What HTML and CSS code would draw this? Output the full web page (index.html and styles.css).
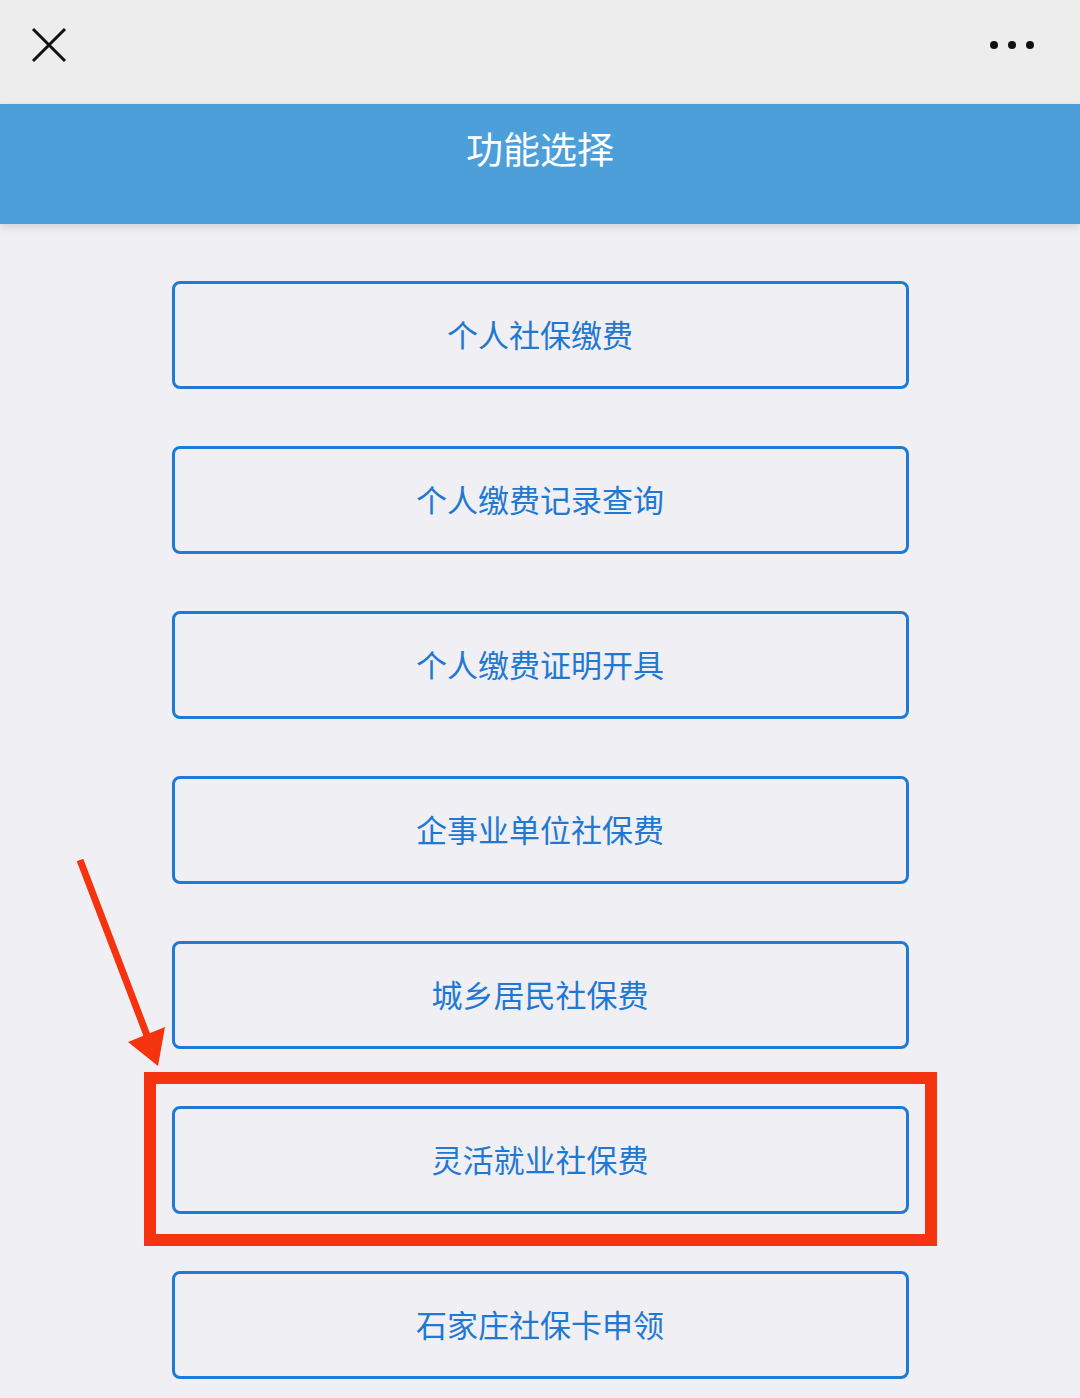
FILE: index.html
```html
<!DOCTYPE html>
<html>
  <head>
    <meta charset="utf-8" />
    <title>功能选择</title>
    <link rel="stylesheet" href="styles.css">
  </head>
  <body>
    <div class="topbar">
      <svg class="close" width="36" height="36" viewBox="0 0 36 36">
        <path d="M2 2 L34 34 M34 2 L2 34" stroke="#111" stroke-width="3" fill="none" />
      </svg>
      <div class="more">
        <span></span><span></span><span></span>
      </div>
    </div>
    <div class="header">功能选择</div>

    <div class="menu">
      <a class="item" href="#">个人社保缴费</a>
      <a class="item" href="#">个人缴费记录查询</a>
      <a class="item" href="#">个人缴费证明开具</a>
      <a class="item" href="#">企事业单位社保费</a>
      <a class="item" href="#">城乡居民社保费</a>
      <a class="item" href="#">灵活就业社保费</a>
      <a class="item" href="#">石家庄社保卡申领</a>
    </div>

    <!-- annotation overlay -->
    <div class="highlight"></div>
    <svg class="arrow" width="120" height="230" viewBox="0 0 120 230">
      <line x1="20" y1="20" x2="88" y2="198" stroke="#f5340f" stroke-width="7" />
      <polygon points="98,226 68,202 105,187" fill="#f5340f" />
    </svg>
  </body>
</html>
```

FILE: styles.css
```css
body {
  margin: 0;
  background: #efeff4;
  font-family: "Noto Sans CJK SC", "Noto Sans", sans-serif;
  position: relative;
  min-height: 1398px;
  overflow: hidden;
}
.topbar {
  height: 104px;
  background: #ededed;
  display: flex;
  align-items: center;
  justify-content: space-between;
  padding: 0 46px 0 31px;
  box-sizing: border-box;
}
.close {
  display: block;
  margin-top: -14px;
}
.more {
  display: flex;
  gap: 10px;
  margin-top: -14px;
}
.more span {
  width: 8px;
  height: 8px;
  border-radius: 50%;
  background: #111;
}
.header {
  height: 120px;
  background: #4d9fd9;
  color: #fff;
  font-size: 37px;
  text-align: center;
  line-height: 88px;
  box-shadow: 0 3px 8px rgba(0, 0, 0, 0.12);
  position: relative;
}
.menu {
  display: flex;
  flex-direction: column;
  align-items: center;
  gap: 57px;
  padding-top: 57px;
}
.item {
  display: flex;
  align-items: center;
  justify-content: center;
  width: 737px;
  height: 108px;
  box-sizing: border-box;
  border: 3px solid #1f7ad6;
  border-radius: 8px;
  color: #1f78d1;
  font-size: 31px;
  line-height: 1;
  padding-bottom: 4px;
  text-decoration: none;
}
.highlight {
  position: absolute;
  left: 144px;
  top: 1072px;
  width: 793px;
  height: 174px;
  box-sizing: border-box;
  border: 12px solid #f5340f;
}
.arrow {
  position: absolute;
  left: 60px;
  top: 840px;
}
```
